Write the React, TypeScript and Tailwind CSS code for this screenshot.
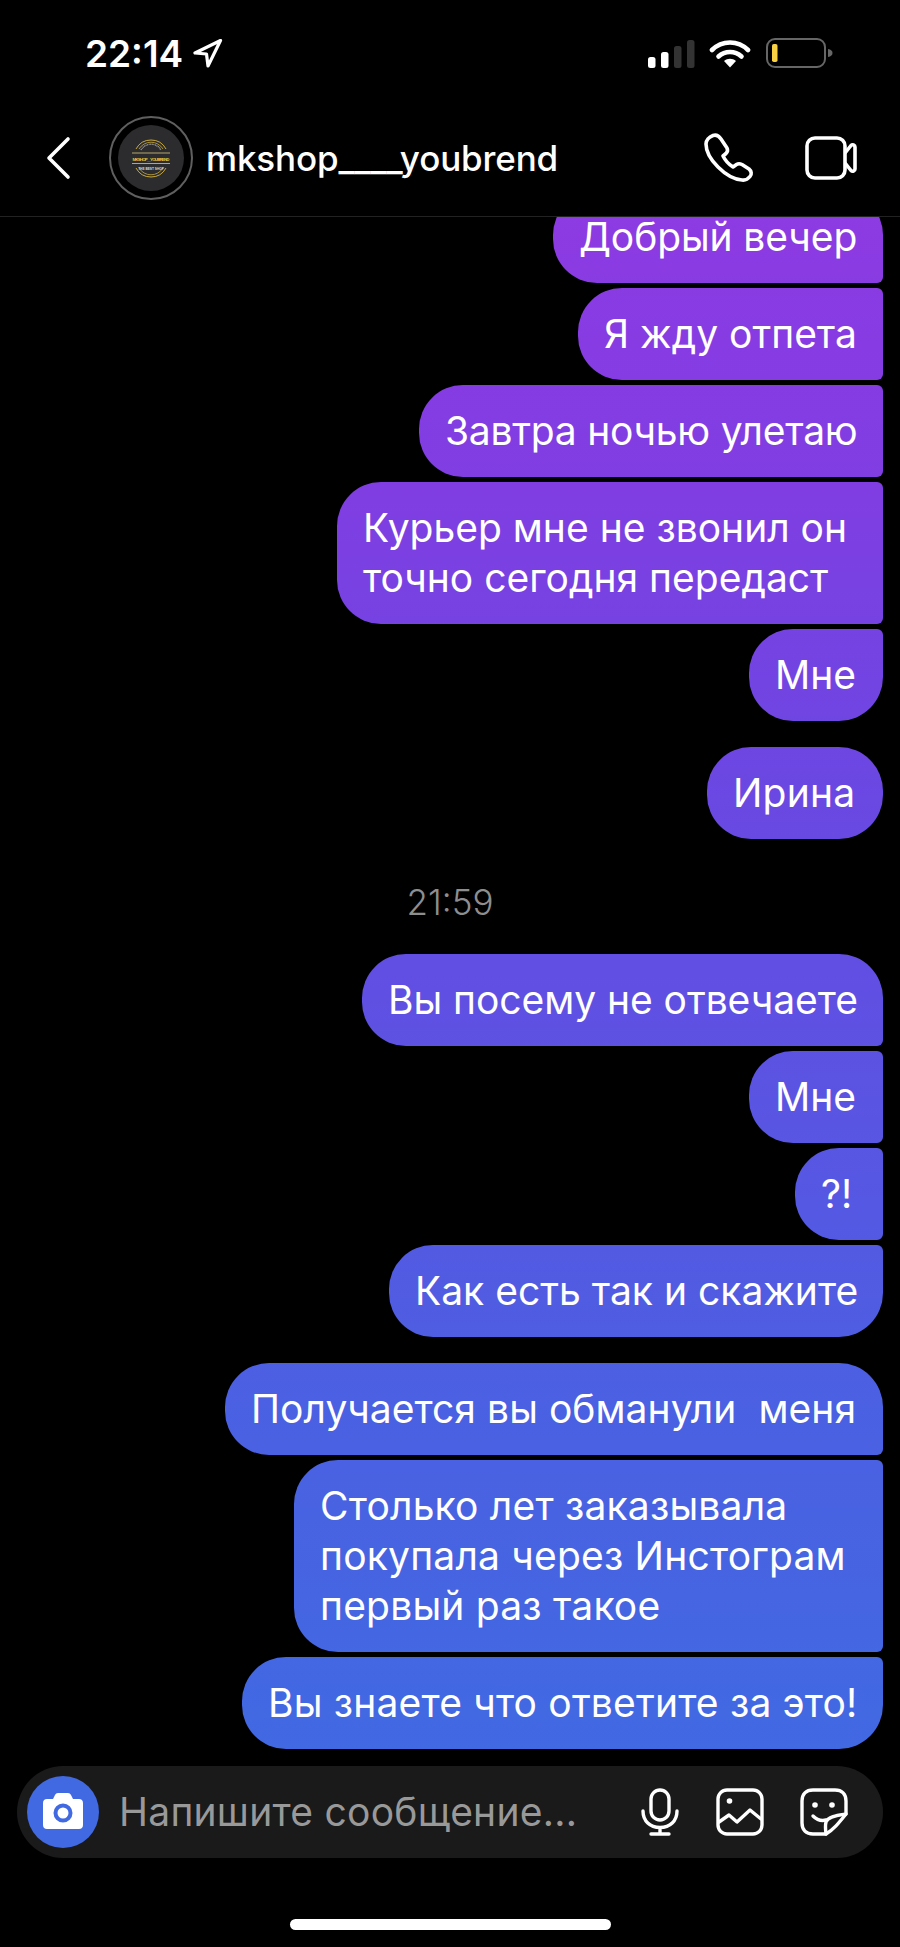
import React from 'react'

type Corner = 'first' | 'middle' | 'last' | 'single'

const cornerClass: Record<Corner, string> = {
  first: 'rounded-tr-[44px] rounded-br-[6px]',
  middle: 'rounded-tr-[6px] rounded-br-[6px]',
  last: 'rounded-tr-[6px] rounded-br-[44px]',
  single: 'rounded-tr-[44px] rounded-br-[44px]',
}

function Bubble({ lines, corner, className = '' }: { lines: string[]; corner: Corner; className?: string }) {
  return (
    <div
      className={`${cornerClass[corner]} ${className} self-end whitespace-pre rounded-l-[44px] bg-[linear-gradient(180deg,#8e3ae2_190px,#7f3ee2_500px,#6a48e2_800px,#5a54e2_1100px,#4b60e2_1400px,#4169e2_1750px)] bg-fixed py-[21px] pl-[26px] text-[39px] leading-[50px] text-white`}
    >
      {lines.map((l) => (
        <div key={l}>{l}</div>
      ))}
    </div>
  )
}

function StatusBar() {
  return (
    <div className="flex h-[108px] items-start justify-between pl-[85px] pr-[66px] pt-[32px]">
      <div className="flex items-center gap-[10px]">
        <span className="text-[37px] font-semibold leading-[44px] text-white">22:14</span>
        <svg width="30" height="30" viewBox="193 40 30 30" fill="none" stroke="#fff" strokeWidth="3.2" strokeLinejoin="round">
          <path d="M220.5 41.5 L195 54 L206.5 55 L208 67 Z" />
        </svg>
      </div>
      <div className="flex items-center pt-[5px]">
        <svg width="48" height="32" viewBox="0 0 48 32" className="mr-[14px]">
          <rect x="1" y="20" width="7.5" height="11" rx="2.5" fill="#fff" />
          <rect x="14" y="15" width="7.5" height="16" rx="2.5" fill="#fff" />
          <rect x="27" y="9" width="7.5" height="22" rx="2.5" fill="#333" />
          <rect x="40" y="3" width="7.5" height="28" rx="2.5" fill="#333" />
        </svg>
        <svg width="42" height="32" viewBox="0 0 42 32" fill="none" className="mr-[15px]">
          <path d="M3 13 C13 3 29 3 39 13" stroke="#fff" strokeWidth="4.6" strokeLinecap="round" />
          <path d="M9.5 19.5 C16 13.5 26 13.5 32.5 19.5" stroke="#fff" strokeWidth="4.6" strokeLinecap="round" />
          <path d="M15 24 C18.5 21 23.5 21 27 24 L21 30.5 Z" fill="#fff" />
        </svg>
        <svg width="68" height="32" viewBox="0 0 68 32">
          <rect x="1" y="2" width="58" height="28" rx="8" fill="none" stroke="#666" strokeWidth="2" />
          <rect x="6" y="7" width="5.5" height="18" rx="1.8" fill="#f7d046" />
          <path d="M62 12 C65 12.5 66.5 14 66.5 16 C66.5 18 65 19.5 62 20 Z" fill="#666" />
        </svg>
      </div>
    </div>
  )
}

function Avatar() {
  return (
    <div className="flex h-[84px] w-[84px] items-center justify-center rounded-full border-2 border-[#5f5f5f]">
      <div className="h-[66px] w-[66px] overflow-hidden rounded-full bg-[#2c2c2e]">
        <svg width="66" height="66" viewBox="0 0 66 66" fill="none" fontFamily="'Liberation Sans', sans-serif">
          <path d="M18 24 A17 17 0 0 1 48 24" stroke="#c9a93a" strokeWidth="1" />
          <path d="M21 24 A14 14 0 0 1 45 24" stroke="#c9a93a" strokeWidth="0.8" />
          <path d="M23 25 A11.5 11.5 0 0 1 43 25" stroke="#9a9a9a" strokeWidth="1.4" strokeDasharray="1 0.6" />
          <path d="M18 43 A17 17 0 0 0 48 43" stroke="#c9a93a" strokeWidth="1" />
          <path d="M21 43 A14 14 0 0 0 45 43" stroke="#c9a93a" strokeWidth="0.8" />
          <path d="M14 28 H52 M14 38.5 H52" stroke="#d8c87a" strokeWidth="0.8" />
          <text x="33" y="35.5" textAnchor="middle" fontSize="4.4" fontWeight="700" fill="#e9c63f" textLength="37">
            MKSHOP__YOUBREND
          </text>
          <text x="33" y="44.5" textAnchor="middle" fontSize="3.2" fontWeight="700" fill="#ddd">
            THE BEST SHOP
          </text>
        </svg>
      </div>
    </div>
  )
}

function Header() {
  return (
    <div className="flex h-[109px] items-center border-b border-[#222] pb-[8px] pl-[44px] pr-[42px]">
      <svg width="28" height="44" viewBox="0 0 28 44" fill="none" stroke="#fff" strokeWidth="3.6" strokeLinecap="round" strokeLinejoin="round">
        <path d="M24 3 L5 22 L24 41" />
      </svg>
      <div className="ml-[37px]">
        <Avatar />
      </div>
      <span className="ml-[13px] flex-1 text-[35px] font-medium leading-[44px] tracking-[-0.15px] text-white">mkshop____youbrend</span>
      <svg width="56" height="56" viewBox="700 130 56 56" fill="none" stroke="#fff" strokeWidth="3.6" strokeLinejoin="round">
        <path d="M713 135.5 C716 134.5 719 136 721 139 L727 148 C728 150 727.5 152 726 153.5 L723 156 C725.5 161 729 164.5 733 167 L736.5 164.5 C738 163.5 740 163.5 742 164.5 L749 169 C751.5 171 752 174.5 750 176.5 C748 179 745.5 180.5 742 180 C735 179.5 726 175 718 167 C711 160 706 151 706 144 C706 140.5 709 137 713 135.5 Z" />
      </svg>
      <svg width="54" height="46" viewBox="0 0 54 46" fill="none" stroke="#fff" strokeWidth="3.6" strokeLinejoin="round" className="ml-[48px]">
        <rect x="3" y="3" width="38" height="40" rx="8" />
        <path d="M41 18 L47 10.5 C48.5 9 51 10 51 12 V34 C51 36 48.5 37 47 35.5 L41 28" />
      </svg>
    </div>
  )
}

function InputBar() {
  return (
    <div className="mx-[17px] flex h-[92px] items-center rounded-full bg-[#1a1a1a] pl-[10px] pr-[35px]">
      <div className="flex h-[72px] w-[72px] shrink-0 items-center justify-center rounded-full bg-[#4169e2]">
        <svg width="42" height="40" viewBox="0 0 42 40">
          <path d="M5 7 H11 L13 3 C13.6 1.8 14.6 1 16 1 H26 C27.4 1 28.4 1.8 29 3 L31 7 H37 C39.5 7 41 8.5 41 11 V33 C41 35.5 39.5 37 37 37 H5 C2.5 37 1 35.5 1 33 V11 C1 8.5 2.5 7 5 7 Z" fill="#fff" />
          <circle cx="21" cy="21" r="7.5" fill="none" stroke="#4169e2" strokeWidth="4" />
        </svg>
      </div>
      <span className="ml-[20px] flex-1 text-[39px] leading-[46px] tracking-[0.25px] text-[#999]">Напишите сообщение...</span>
      <svg width="38" height="48" viewBox="0 0 38 48" fill="none" stroke="#fff" strokeWidth="3.4" strokeLinecap="round">
        <rect x="10" y="2" width="18" height="30" rx="9" />
        <path d="M2 23 C2 33 9 39.5 19 39.5 C29 39.5 36 33 36 23 M19 39.5 V46 M10 46 H28" />
      </svg>
      <svg width="48" height="48" viewBox="0 0 48 48" fill="none" stroke="#fff" strokeWidth="3.4" strokeLinejoin="round" strokeLinecap="round" className="ml-[37px]">
        <rect x="2" y="2" width="44" height="44" rx="9" />
        <circle cx="13.5" cy="13" r="2.8" fill="#fff" stroke="none" />
        <path d="M3 34 L13 27 L21 34 L34 22 L45 31" />
      </svg>
      <svg width="48" height="48" viewBox="0 0 48 48" fill="none" stroke="#fff" strokeWidth="3.4" strokeLinejoin="round" strokeLinecap="round" className="ml-[36px]">
        <path d="M26 46 H13 C6 46 2 42 2 35 V13 C2 6 6 2 13 2 H35 C42 2 46 6 46 13 V26 C38 36 34 41 26 46 Z" />
        <path d="M46 26 C40 27 28 28 26 34 C25 38 25.5 42 26 46" />
        <circle cx="15" cy="17" r="2.8" fill="#fff" stroke="none" />
        <circle cx="32" cy="17" r="2.8" fill="#fff" stroke="none" />
        <path d="M13 28 C17 32 22 33 26 32" />
      </svg>
    </div>
  )
}

export default function App() {
  return (
    <div className="flex h-[1947px] w-[900px] flex-col overflow-hidden bg-black font-['Inter',sans-serif]">
      <StatusBar />
      <Header />
      <div className="h-[1549px] overflow-hidden pr-[17px]">
        <div className="-mt-[26px] flex flex-col gap-[5px]">
          <Bubble lines={['Добрый вечер']} corner="first" className="w-[330px] tracking-[-0.1px]" />
          <Bubble lines={['Я жду отпета']} corner="middle" className="w-[305px]" />
          <Bubble lines={['Завтра ночью улетаю']} corner="middle" className="w-[464px] tracking-[-0.25px]" />
          <Bubble lines={['Курьер мне не звонил он', 'точно сегодня передаст']} corner="middle" className="w-[546px]" />
          <Bubble lines={['Мне']} corner="last" className="w-[134px]" />
          <Bubble lines={['Ирина']} corner="single" className="mt-[21px] w-[176px] tracking-[0.2px]" />
          <div className="ml-[17px] flex h-[105px] items-center justify-center pt-[12px] text-[35px] font-light text-[#8e8e8e]">21:59</div>
          <Bubble lines={['Вы посему не отвечаете']} corner="first" className="w-[521px] tracking-[-0.05px]" />
          <Bubble lines={['Мне']} corner="middle" className="w-[134px]" />
          <Bubble lines={['?!']} corner="middle" className="w-[88px]" />
          <Bubble lines={['Как есть так и скажите']} corner="last" className="w-[494px]" />
          <Bubble lines={['Получается вы обманули  меня']} corner="first" className="mt-[21px] w-[658px] tracking-[0.05px]" />
          <Bubble lines={['Столько лет заказывала', 'покупала через Инстограм', 'первый раз такое']} corner="middle" className="w-[589px] tracking-[0.2px]" />
          <Bubble lines={['Вы знаете что ответите за это!']} corner="last" className="w-[641px] tracking-[0.18px]" />
        </div>
      </div>
      <InputBar />
      <div className="mx-auto mt-[61px] h-[11px] w-[321px] rounded-full bg-white" />
    </div>
  )
}
